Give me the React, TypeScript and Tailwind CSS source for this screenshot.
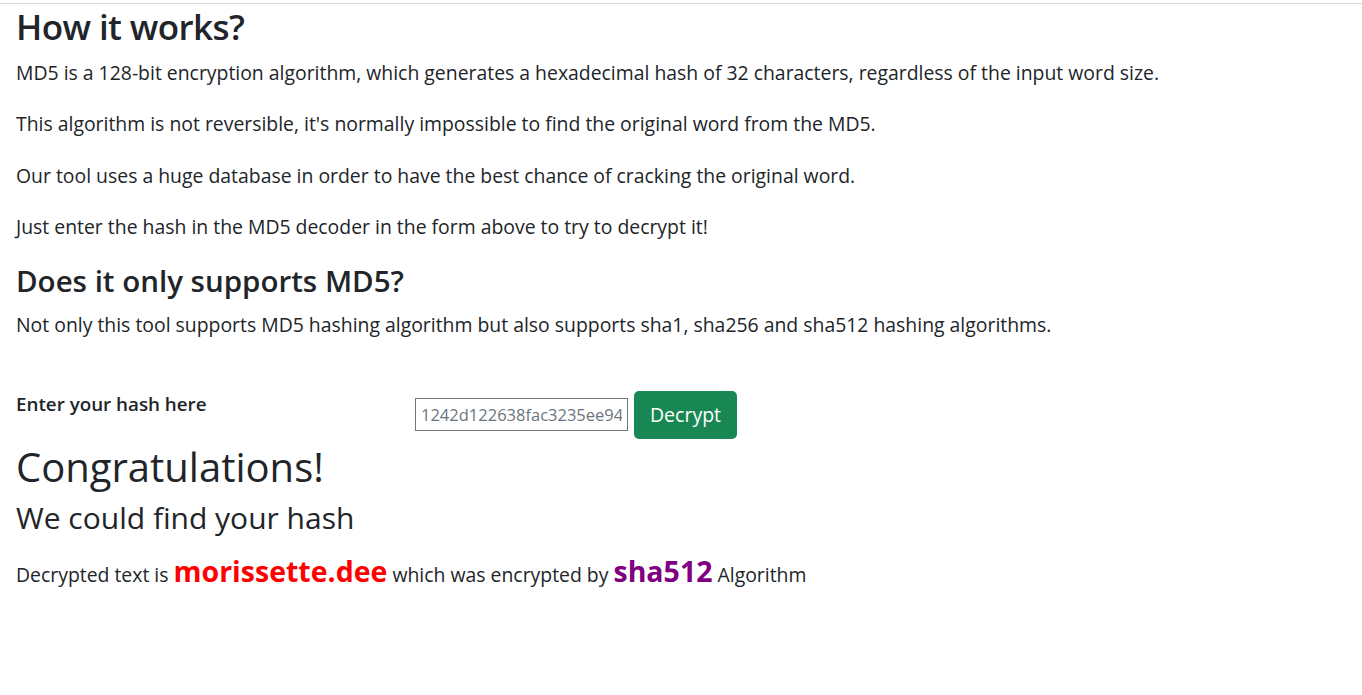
import React from "react";

export default function App() {
  return (
    <div className="min-h-screen bg-white text-[#212529]" style={{ fontFamily: '"Open Sans", "Noto Sans", sans-serif' }}>
      <div className="h-[3px]" />
      <div className="border-t border-[#dcdcdc]" />
      <div className="px-4">
        <h2 className="text-[35px] leading-[45px] font-semibold mb-[9px] tracking-[-0.6px]">How it works?</h2>
        <p className="text-[19.4px] leading-[30px] mb-[21.3px]">MD5 is a 128-bit encryption algorithm, which generates a hexadecimal hash of 32 characters, regardless of the input word size.</p>
        <p className="text-[19.4px] leading-[30px] mb-[21.3px]">This algorithm is not reversible, it's normally impossible to find the original word from the MD5.</p>
        <p className="text-[19.4px] leading-[30px] mb-[21.3px]">Our tool uses a huge database in order to have the best chance of cracking the original word.</p>
        <p className="text-[19.4px] leading-[30px] mb-[21px]">Just enter the hash in the MD5 decoder in the form above to try to decrypt it!</p>
        <h4 className="text-[29.5px] leading-[35px] font-semibold mb-[12px]">Does it only supports MD5?</h4>
        <p className="text-[19.4px] leading-[30px] mb-[50px]">Not only this tool supports MD5 hashing algorithm but also supports sha1, sha256 and sha512 hashing algorithms.</p>
        <div className="flex items-start">
          <label className="w-[399px] text-[18.8px] leading-[28px] font-semibold">Enter your hash here</label>
          <div className="flex items-center gap-[6px] mt-[1px]">
            <input
              readOnly
              defaultValue="1242d122638fac3235ee94a3f2b8c1d7e9"
              className="w-[213px] h-[33px] border border-[#767676] px-[5px] text-[16.5px] text-[#6c757d] outline-none"
            />
            <button className="h-[48px] w-[103px] rounded-[5px] bg-[#198754] text-white text-[19.5px]">Decrypt</button>
          </div>
        </div>
        <h2 className="text-[40px] leading-[46px] font-medium mt-[5px] mb-[10px]">Congratulations!</h2>
        <h4 className="text-[30px] leading-[36px] font-medium mb-[20px]">We could find your hash</h4>
        <p className="text-[19.4px] leading-[30px]">
          Decrypted text is{" "}
          <span className="text-[#ff0000] font-bold text-[28.5px]">morissette.dee</span>{" "}
          which was encrypted by{" "}
          <span className="text-[#800080] font-bold text-[28.5px]">sha512</span> Algorithm
        </p>
      </div>
    </div>
  );
}
